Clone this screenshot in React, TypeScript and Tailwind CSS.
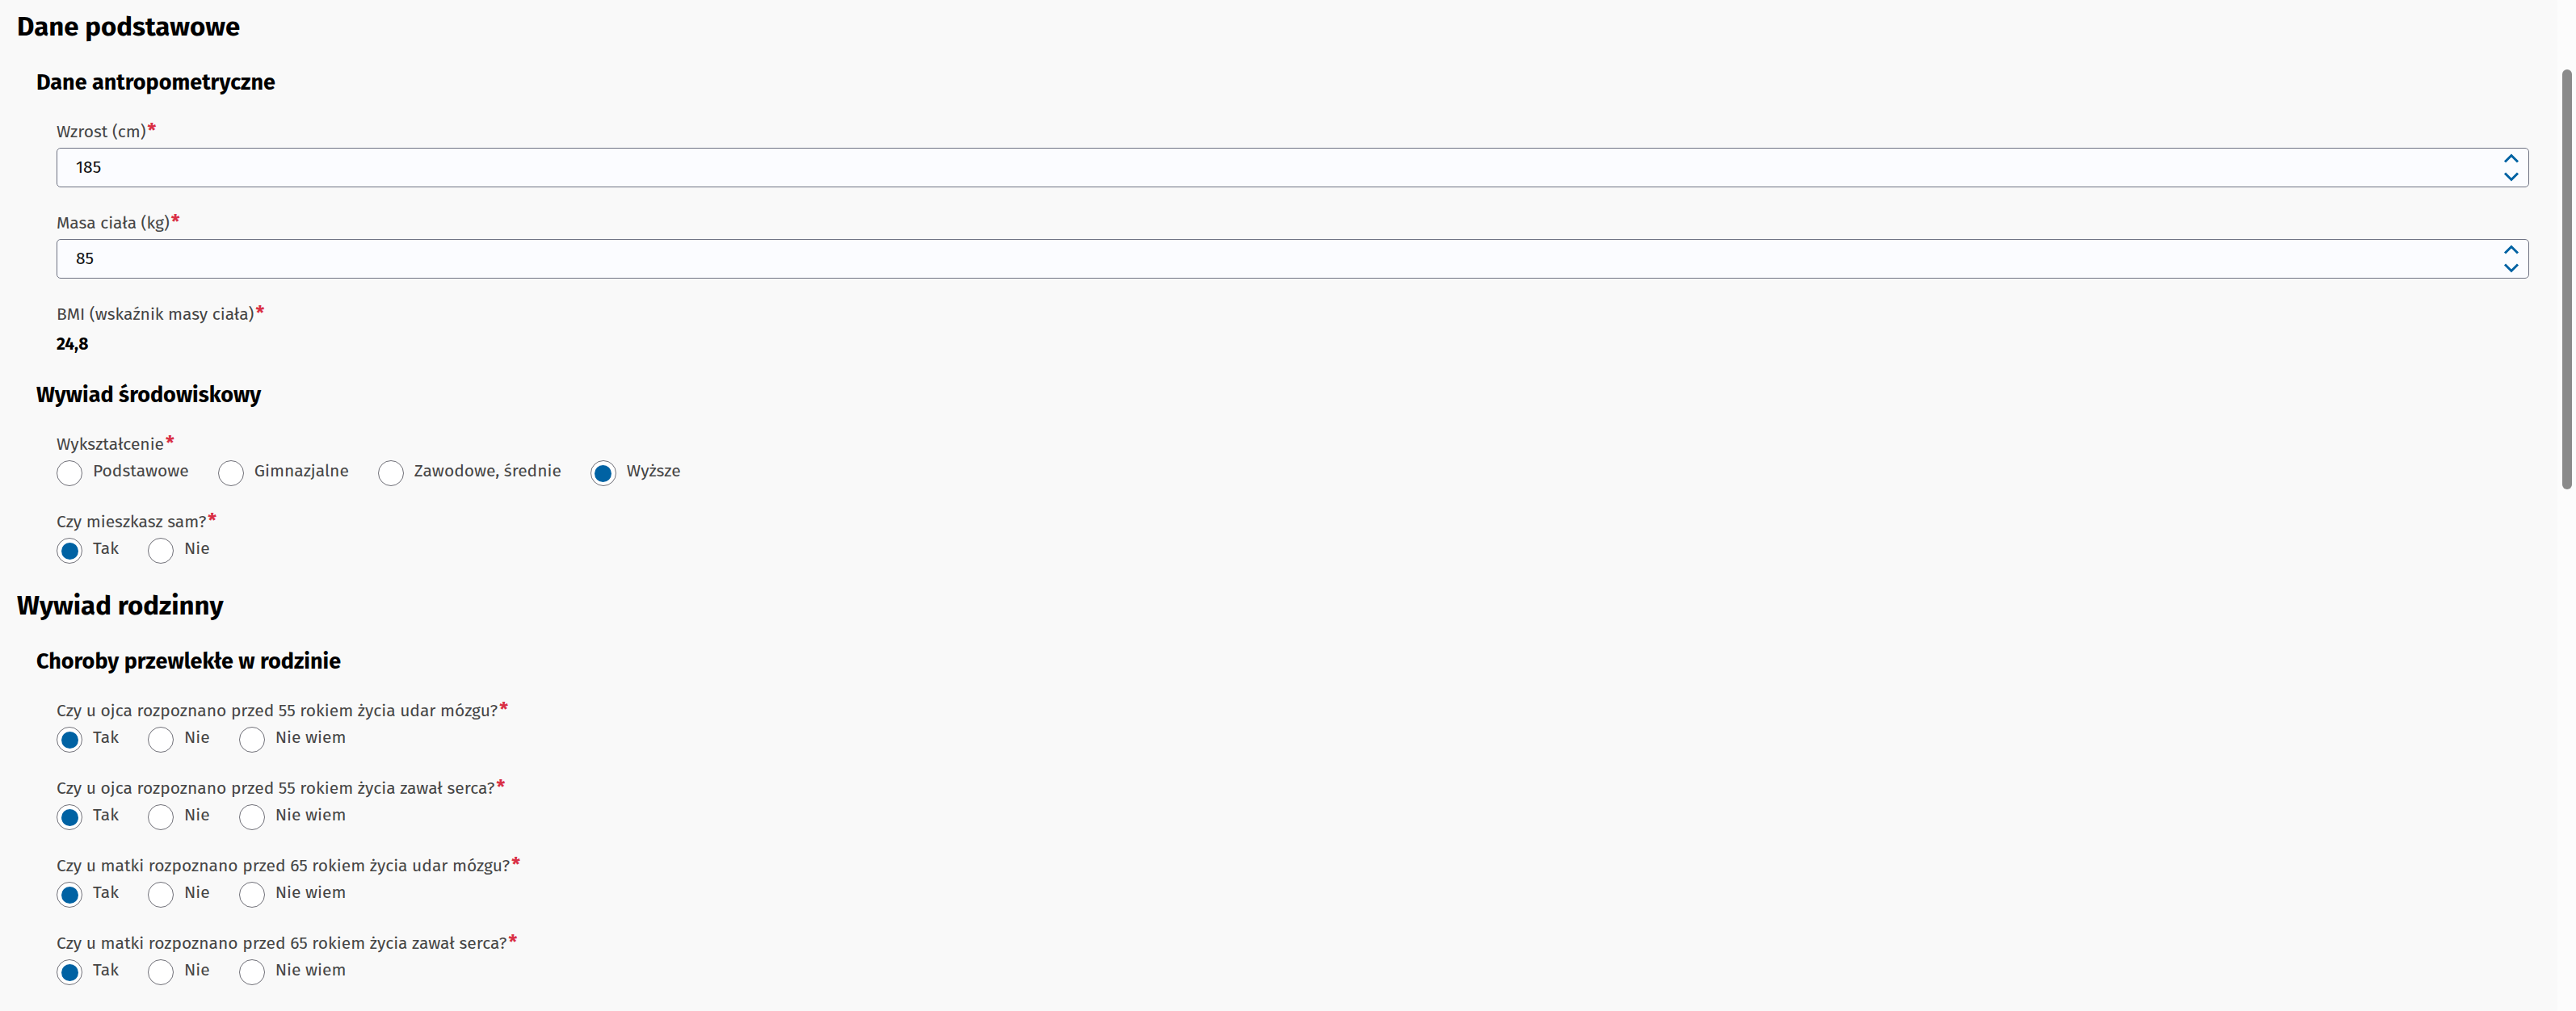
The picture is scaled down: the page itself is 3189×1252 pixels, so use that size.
const font = { fontFamily: '"Fira Sans", Lato, "Noto Sans", sans-serif' };

function Req() {
  return <span className="ml-[2px] text-[24px] font-bold leading-none text-[#d92f45]">*</span>;
}

function Label({ children }: { children: React.ReactNode }) {
  return (
    <div className="text-[21px] leading-[28px] text-[#454545]">
      {children}
      <Req />
    </div>
  );
}

function Spinner() {
  return (
    <svg width="20" height="35" viewBox="0 0 20 35" fill="none" stroke="#0062a3" strokeWidth={3}>
      <polyline points="2,10.5 10,2.5 18,10.5" />
      <polyline points="2,24.5 10,32.5 18,24.5" />
    </svg>
  );
}

function NumberField({ label, value }: { label: string; value: string }) {
  return (
    <div>
      <Label>{label}</Label>
      <div className="mt-[6px] flex h-[49px] items-center rounded-[5px] border border-[#6e7282] bg-[#fbfcff] pl-[23px] pr-[11px]">
        <span className="flex-1 text-[21px] text-[#111]">{value}</span>
        <Spinner />
      </div>
    </div>
  );
}

function Radio({ checked }: { checked?: boolean }) {
  return (
    <span className="flex size-8 shrink-0 items-center justify-center rounded-full border-[1.5px] border-[#707078] bg-white">
      {checked && <span className="size-[21px] rounded-full bg-[#0062a3]" />}
    </span>
  );
}

function RadioField({ label, options, selected }: { label: string; options: string[]; selected: number }) {
  return (
    <div>
      <Label>{label}</Label>
      <div className="mt-[6px] flex items-start gap-[36px]">
        {options.map((o, i) => (
          <div key={o} className="flex items-start gap-[13px]">
            <Radio checked={i === selected} />
            <span className="-mt-px text-[21px] leading-[28px] text-[#454545]">{o}</span>
          </div>
        ))}
      </div>
    </div>
  );
}

function H2({ children, className = "" }: { children: React.ReactNode; className?: string }) {
  return <h2 className={`text-[33px] font-bold leading-[40px] text-black ${className}`}>{children}</h2>;
}

function Sub({ title, children, className = "" }: { title: string; children: React.ReactNode; className?: string }) {
  return (
    <section className={`pl-[24px] ${className}`}>
      <h3 className="text-[27px] font-bold leading-[32px] text-black">{title}</h3>
      <div className="mt-[31px] flex flex-col gap-[30px] pl-[25px]">{children}</div>
    </section>
  );
}

const yesNoMaybe = ["Tak", "Nie", "Nie wiem"];

export default function App() {
  return (
    <div className="flex h-[1252px] overflow-hidden bg-[#f9f9f9]" style={font}>
      <main className="flex-1 pl-[21px] pr-[35px] pt-[13px]">
        <H2>Dane podstawowe</H2>
        <Sub title="Dane antropometryczne" className="mt-[33px]">
          <NumberField label="Wzrost (cm)" value="185" />
          <NumberField label="Masa ciała (kg)" value="85" />
          <div>
            <Label>BMI (wskaźnik masy ciała)</Label>
            <div className="mt-[9px] text-[21px] font-bold leading-[28px] text-black">24,8</div>
          </div>
        </Sub>
        <Sub title="Wywiad środowiskowy" className="mt-[33px]">
          <RadioField
            label="Wykształcenie"
            options={["Podstawowe", "Gimnazjalne", "Zawodowe, średnie", "Wyższe"]}
            selected={3}
          />
          <RadioField label="Czy mieszkasz sam?" options={["Tak", "Nie"]} selected={0} />
        </Sub>

        <H2 className="mt-[32px]">Wywiad rodzinny</H2>
        <Sub title="Choroby przewlekłe w rodzinie" className="mt-[33px]">
          <RadioField label="Czy u ojca rozpoznano przed 55 rokiem życia udar mózgu?" options={yesNoMaybe} selected={0} />
          <RadioField label="Czy u ojca rozpoznano przed 55 rokiem życia zawał serca?" options={yesNoMaybe} selected={0} />
          <RadioField label="Czy u matki rozpoznano przed 65 rokiem życia udar mózgu?" options={yesNoMaybe} selected={0} />
          <RadioField label="Czy u matki rozpoznano przed 65 rokiem życia zawał serca?" options={yesNoMaybe} selected={0} />
        </Sub>
      </main>
      <aside className="w-[23px] shrink-0 bg-[#fcfcfc] pl-[6px] pt-[86px]">
        <div className="h-[520px] w-[12px] rounded-full bg-[#8a8a8a]" />
      </aside>
    </div>
  );
}
